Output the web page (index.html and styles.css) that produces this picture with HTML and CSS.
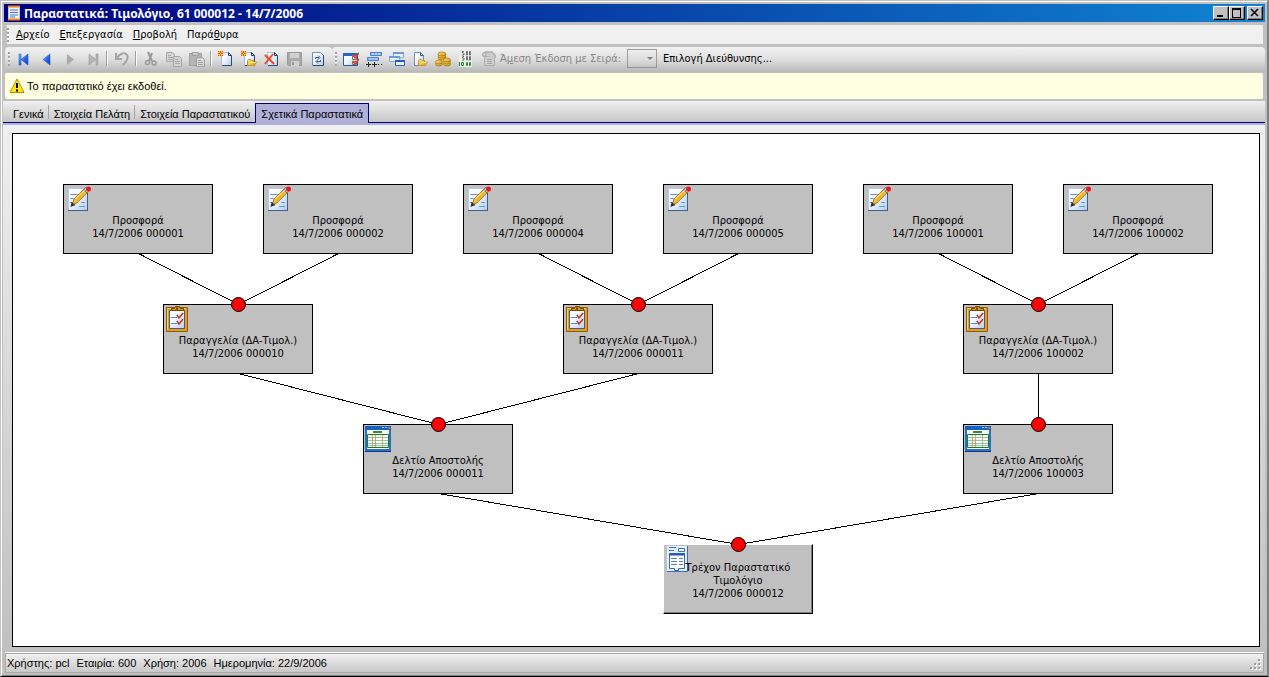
FILE: index.html
```html
<!DOCTYPE html>
<html lang="el">
<head>
<meta charset="utf-8">
<title>Παραστατικά: Τιμολόγιο, 61 000012 - 14/7/2006</title>
<link rel="stylesheet" href="styles.css">
</head>
<body>
<svg class="defs" aria-hidden="true">
  <defs>
    <linearGradient id="blue" x1="0" y1="0" x2="1" y2="1"><stop offset="0" stop-color="#8cc0ff"/><stop offset=".5" stop-color="#2a6cf0"/><stop offset="1" stop-color="#0a2fb0"/></linearGradient>
    <linearGradient id="paper" x1="0" y1="0" x2="1" y2="1"><stop offset="0" stop-color="#fff"/><stop offset=".4" stop-color="#f4f8ff"/><stop offset="1" stop-color="#b4cdec"/></linearGradient>
    <linearGradient id="gold" x1="0" y1="0" x2="1" y2="1"><stop offset="0" stop-color="#ffe878"/><stop offset="1" stop-color="#d09818"/></linearGradient>
    <symbol id="page" viewBox="0 0 16 16"><path d="M3.500 1.500h7l3 3v10h-10z" fill="url(#paper)" stroke="#a8bcd8"/><path d="M10.500 1.500v3h3" fill="#dce8f8" stroke="#28486c"/><path d="M4 14.500h9.500V4.500l-3-3" fill="none" stroke="#284c74"/></symbol>
    <symbol id="star" viewBox="0 0 16 16"><path d="M0 0h5v5H0z" fill="#ffc830"/><path d="M0 0h1v1H0zM2 0h1v2H2zM4 0h1v1H4zM0 2h2v1H0zM3 2h2v1H3zM0 4h1v1H0zM2 3h1v2H2zM4 4h1v1H4z" fill="#e84810"/><path d="M2 2h1v1H2z" fill="#ffffa0"/></symbol>
    <symbol id="folder" viewBox="0 0 16 16"><path d="M6.500 14.500V9.500l1-1h2l1 1h2v1.500h3l-2 3.500z" fill="url(#gold)" stroke="#c09828"/><path d="M8 13.500l2-2h4.500" fill="none" stroke="#fff0a0"/></symbol>
    <symbol id="i-note" viewBox="0 0 24 26"><path d="M1 2h19v22H1z" fill="url(#paper)"/><path d="M1.500 24V2.500H20" fill="none" stroke="#b4c8e8"/><path d="M1 24.500h20M20.500 6v19" stroke="#3c6090"/><path d="M3 8.500h9M3 12.500h6M3 16.500h4M14 16.500h4M12 20.500h6" stroke="#6c98dc"/><path d="M5 19l2-6L17 3l4 3L10 17z" fill="#f0b830" stroke="#906410" stroke-width=".7"/><path d="M8 13L18 4" stroke="#ffe888"/><path d="M17 3l2-2 3 4-2 2z" fill="#b8c8e0" stroke="#506888" stroke-width=".7"/><circle cx="21.500" cy="3" r="2.500" fill="#f01818"/><path d="M3.500 21l1-5 4 3z" fill="#303030"/></symbol>
    <symbol id="i-clip" viewBox="0 0 22 26"><path d="M.5 1.500h21v24H.5z" fill="#e89c18" stroke="#945800"/><path d="M1.500 24V2.500H20" fill="none" stroke="#ffd060"/><path d="M3.500 4.500h15v18h-15z" fill="url(#paper)" stroke="#3c5c98"/><path d="M5.500 4.500v-2h3l1-2h4l1 2h3v2z" fill="#d8981c" stroke="#744400"/><circle cx="11" cy="2.500" r="1" fill="#402800"/><path d="M5 11.500h6M5 17.500h6" stroke="#5888d8"/><path d="M11 9l2 3 4-5M11 15l2 3 4-5" fill="none" stroke="#c83020" stroke-width="1.500"/></symbol>
    <symbol id="i-table" viewBox="0 0 26 26"><path d="M0 0h26v26H0z" fill="#2470d0"/><path d="M0 0h26v4H0z" fill="#1760c4"/><path d="M17 1h2v1h-2zM20 1h2v1h-2z" fill="#a8d4ff"/><path d="M23 1h2v2h-2z" fill="#f06028"/><path d="M2 4h22v19H2z" fill="#f8fcff"/><path d="M8 5h9v2H8z" fill="#348c34"/><path d="M2.500 8.500h21v13h-21z" fill="#fff" stroke="#188018"/><path d="M3 11.500h20M3 14.500h20M3 17.500h20M3 19.500h20" stroke="#90c8a0"/><path d="M7.500 9v12M10.500 9v12M17.500 9v12" stroke="#d0a070"/><path d="M0 25.500h26" stroke="#103880"/></symbol>
    <symbol id="i-invoice" viewBox="0 0 21 26"><path d="M0 0h20v25H0z" fill="#e4eefc"/><path d="M20.500 0v25.500H0" fill="none" stroke="#3c6cc0"/><path d="M2 1.500h7M2 4.500h5" stroke="#3870c8"/><path d="M11.500 2.500h6v3h-6z" fill="#fff" stroke="#3870c8"/><path d="M2.500 7.500h15v15h-6v2h-4v-2h-5z" fill="#fff" stroke="#3468b8"/><path d="M2 8.500h16" stroke="#2458b0" stroke-width="2"/><path d="M4 12.500h6M4 15.500h6M4 18.500h6M12 12.500h4M12 15.500h4M12 18.500h4" stroke="#5080c8"/></symbol>
  </defs>
</svg>
<div class="window">
  <header class="titlebar">
    <svg class="app-icon" viewBox="0 0 16 16"><path d="M2 1h12v14H2z" fill="#eaf2fc"/><path d="M2 1.500h12M2 14.500h12" stroke="#f08010" stroke-width="2"/><path d="M4 5h8M4 7.500h8M4 10h8" stroke="#4878b8"/><path d="M2.500 3v10M13.500 3v10" stroke="#b8c8d8"/><path d="M4 12h5" stroke="#4878b8"/></svg>
    <h1 class="title">Παραστατικά: Τιμολόγιο, 61 000012 - 14/7/2006</h1>
    <div class="controls">
      <button class="control" aria-label="Ελαχιστοποίηση"><svg viewBox="0 0 12 10"><path d="M2 8h6" stroke="#000" stroke-width="2"/></svg></button>
      <button class="control" aria-label="Μεγιστοποίηση"><svg viewBox="0 0 12 10"><path d="M1.500 1h8v8h-8z" fill="none" stroke="#000"/><path d="M1 1h9" stroke="#000" stroke-width="2"/></svg></button>
      <button class="control control-close" aria-label="Κλείσιμο"><svg viewBox="0 0 12 10"><path d="M2 1l7 7M9 1L2 8" stroke="#000" stroke-width="1.500"/></svg></button>
    </div>
  </header>
  <nav class="menubar">
    <span class="grip"></span>
    <button class="menu"><u>Α</u>ρχείο</button>
    <button class="menu"><u>Ε</u>πεξεργασία</button>
    <button class="menu"><u>Π</u>ροβολή</button>
    <button class="menu">Παρά<u>θ</u>υρα</button>
  </nav>
  <div class="toolbars">
    <div class="toolbar">
      <span class="grip"></span>
      <button class="tool" aria-label="Πρώτο"><svg viewBox="0 0 16 16"><path d="M3 3h2v11H3zM12 3v11L5 8.500z" fill="url(#blue)" stroke="#2860d0" stroke-width=".6"/></svg></button>
      <button class="tool" aria-label="Προηγούμενο"><svg viewBox="0 0 16 16"><path d="M11 3v11L4 8.500z" fill="url(#blue)" stroke="#2860d0" stroke-width=".6"/></svg></button>
      <button class="tool" aria-label="Επόμενο" disabled><svg viewBox="0 0 16 16"><path d="M5 3v11l7-5.500z" fill="#aaa"/></svg></button>
      <button class="tool" aria-label="Τελευταίο" disabled><svg viewBox="0 0 16 16"><path d="M4 3v11l7-5.500zM11 3h2v11h-2z" fill="#b4b4b4" stroke="#9c9c9c" stroke-width=".6"/></svg></button>
      <span class="separator"></span>
      <button class="tool" aria-label="Αναίρεση" disabled><svg viewBox="0 0 16 16"><path d="M2 2v6h6M3 7c3-5 8-6 10-3s0 6-4 10" fill="none" stroke="#a4a4a4" stroke-width="2"/></svg></button>
      <span class="separator"></span>
      <button class="tool" aria-label="Αποκοπή" disabled><svg viewBox="0 0 16 16"><path d="M5 1l4 9M9 2L6 10" stroke="#999" stroke-width="2"/><circle cx="4.500" cy="11.500" r="2" fill="none" stroke="#999" stroke-width="1.500"/><circle cx="11" cy="12" r="2" fill="none" stroke="#999" stroke-width="1.500"/></svg></button>
      <button class="tool" aria-label="Αντιγραφή" disabled><svg viewBox="0 0 16 16"><g fill="#d4d4d4" stroke="#a8a8a8"><path d="M.5 1.500h6l2 2v7h-8z"/><path d="M7.500 5.500h6l2 2v8h-8z"/><path d="M2 4.500h3M2 6.500h5M2 8.500h5M9 8.500h3M9 10.500h5M9 12.500h5"/></g></svg></button>
      <button class="tool" aria-label="Επικόλληση" disabled><svg viewBox="0 0 16 16"><g stroke="#a0a0a0"><path d="M.5 2.500h12v12H.5z" fill="#b4b4b4"/><path d="M3.500 1.500h6v3h-6z" fill="#ccc"/><path d="M7.500 6.500h6l2 2v7h-8z" fill="#d8d8d8"/><path d="M9 9.500h3M9 11.500h5M9 13.500h5"/></g></svg></button>
      <span class="separator"></span>
      <button class="tool" aria-label="Νέο"><svg viewBox="0 0 16 16"><use href="#page"/><use href="#star"/></svg></button>
      <button class="tool" aria-label="Νέο από"><svg viewBox="0 0 16 16"><use href="#page"/><use href="#star"/><use href="#folder"/></svg></button>
      <button class="tool" aria-label="Διαγραφή"><svg viewBox="0 0 16 16"><use href="#page"/><path d="M1 4l9 9M9 3L1 13" stroke="#f04828" stroke-width="2"/></svg></button>
      <button class="tool" aria-label="Αποθήκευση" disabled><svg viewBox="0 0 16 16"><path d="M.5 1.500h14v13h-13l-1-1z" fill="#aaa" stroke="#989898"/><path d="M3 2h9v5H3zM4 10h8v5H4z" fill="#d0d0d0"/><path d="M5 11h2v3H5z" fill="#999"/></svg></button>
      <button class="tool" aria-label="Ανανέωση"><svg viewBox="0 0 16 16"><path d="M2.500 1.500h8l3 3v10h-11z" fill="url(#paper)" stroke="#7090b8"/><path d="M3 14.500h10.500V4.500" fill="none" stroke="#284870"/><path d="M5.500 8V6.500H9M8 4.500l2 2-2 2M10.500 9v1.500H7M8 8.500l-2 2 2 2" fill="none" stroke="#345490"/></svg></button>
    </div>
    <div class="toolbar toolbar-wide">
      <span class="grip"></span>
      <button class="tool" aria-label="Επιλογές"><svg viewBox="0 0 16 16"><path d="M.5 2.500h14v12H.5z" fill="url(#paper)" stroke="#2458a8"/><path d="M0 2h15v3H0z" fill="#2864c8"/><path d="M9.500 4.500h4v4h-4zM9.500 10.500h4v3h-4z" fill="#fff" stroke="#707070"/><path d="M10 4l2 3 4-5M10 10l2 3 4-5" fill="none" stroke="#f03818" stroke-width="1.500"/></svg></button>
      <button class="tool" aria-label="Προσθήκη γραμμής"><svg viewBox="0 0 16 16"><path d="M4.500 1.500h11v3h-11zM1.500 6.500h11v3h-11z" fill="#84aef0" stroke="#5080d0"/><path d="M6 3h8M3 8h8" stroke="#e0ecff" stroke-dasharray="2 1"/><path d="M0 13.500h5M2.500 11v5M6 13.500h5M8.500 11v5M12 13.500h1M15 13.500h1" stroke="#222"/></svg></button>
      <button class="tool" aria-label="Παράθυρα"><svg viewBox="0 0 16 16"><g fill="#e4efff" stroke="#8ca8d8"><path d="M4.500 1.500h10v5h-10zM.5 5.500h10v5H.5z"/><path d="M6.500 9.500h9v5h-9z" stroke="#2860c8"/></g><path d="M4 2h11M0 6h11" stroke="#7098d8" stroke-width="2"/><path d="M6 10h10" stroke="#2060d8" stroke-width="2"/></svg></button>
      <button class="tool" aria-label="Άνοιγμα"><svg viewBox="0 0 16 16"><path d="M2.500 1.500h6l3 3v10h-9z" fill="url(#paper)" stroke="#7890b0"/><path d="M8.500 1.500v3h3" fill="none" stroke="#385880"/><use href="#folder"/></svg></button>
      <button class="tool" aria-label="Πληρωμές"><svg viewBox="0 0 16 16"><g fill="url(#gold)" stroke="#a86c08" stroke-width=".7"><ellipse cx="7" cy="7" rx="4" ry="2"/><ellipse cx="7" cy="5" rx="4" ry="2"/><ellipse cx="7" cy="3" rx="4" ry="2"/><ellipse cx="4" cy="13" rx="3.500" ry="2"/><ellipse cx="4" cy="11" rx="3.500" ry="2"/><ellipse cx="12" cy="13" rx="3.500" ry="2"/><ellipse cx="12" cy="11" rx="3.500" ry="2"/><ellipse cx="12" cy="9" rx="3.500" ry="2"/></g></svg></button>
      <button class="tool" aria-label="Σύνολα"><svg viewBox="0 0 16 16"><path d="M1 0h13v16H1z" fill="#ececec"/><g fill="none" stroke="#585858" stroke-width=".8"><path d="M6 .5H4.500v1.500H6v2H4M8.500.5h1v3.500h-1zM11.500.5h1v3.500h-1z"/><path d="M6 5.500H4.500V7H6v2H4M8.500 5.500h1V9h-1zM11.500 5.500h1V9h-1z"/></g><path d="M1.500 11v4M3.500 11.500h2v3h-2zM8.500 11.500h1v3h-1zM11.500 11.500h1v3h-1z" fill="none" stroke="#209828"/></svg></button>
      <button class="tool" aria-label="Έκδοση" disabled><svg viewBox="0 0 16 16"><path d="M3.500 5.500h10v9h-10z" fill="#d0d0d0" stroke="#acacac"/><path d="M1 4l3-3h7l3 3v3M1 4l3 2 1-4" fill="#ccc" stroke="#b0b0b0" stroke-width="1.500"/><path d="M6 8.500h5M6 10.500h5M6 12.500h5" stroke="#a4a4a4"/></svg></button>
      <label class="series-label" for="series">Ά<u>μ</u>εση Έκδοση με Σειρά:</label>
      <span class="series-box"><select id="series" class="series" disabled></select></span>
      <button class="address">Επιλογή Διεύθυνσης...</button>
    </div>
  </div>
  <div class="notice" role="status">
    <svg class="warning" viewBox="0 0 16 16"><path d="M8 1l7 13.500H1z" fill="#ffe818" stroke="#b09000" stroke-linejoin="round"/><path d="M8 5v5M8 11.500v2" stroke="#000" stroke-width="2"/></svg>
    <span>Το παραστατικό έχει εκδοθεί.</span>
  </div>
  <nav class="tabs" role="tablist">
    <button class="tab" role="tab">Γενικά</button>
    <button class="tab" role="tab">Στοιχεία Πελάτη</button>
    <button class="tab" role="tab">Στοιχεία Παραστατικού</button>
    <button class="tab tab-active" role="tab" aria-selected="true">Σχετικά Παραστατικά</button>
  </nav>
  <main class="content">
    <div class="canvas">
      <svg class="links" viewBox="0 0 1200 500"><path class="link" d="M125.500 119.500l100 51 100-51M525.500 119.500l100 51 100-51M925.500 119.500l100 51 100-51M225.500 239.500l200 51 200-51M1025.500 239.500v51M425.500 359.500l300 51 300-51"/></svg>
      <div class="node offer n1"><svg class="node-icon" viewBox="0 0 24 26"><use href="#i-note"/></svg><span>Προσφορά</span><span>14/7/2006 000001</span></div>
      <div class="node offer n2"><svg class="node-icon" viewBox="0 0 24 26"><use href="#i-note"/></svg><span>Προσφορά</span><span>14/7/2006 000002</span></div>
      <div class="node offer n3"><svg class="node-icon" viewBox="0 0 24 26"><use href="#i-note"/></svg><span>Προσφορά</span><span>14/7/2006 000004</span></div>
      <div class="node offer n4"><svg class="node-icon" viewBox="0 0 24 26"><use href="#i-note"/></svg><span>Προσφορά</span><span>14/7/2006 000005</span></div>
      <div class="node offer n5"><svg class="node-icon" viewBox="0 0 24 26"><use href="#i-note"/></svg><span>Προσφορά</span><span>14/7/2006 100001</span></div>
      <div class="node offer n6"><svg class="node-icon" viewBox="0 0 24 26"><use href="#i-note"/></svg><span>Προσφορά</span><span>14/7/2006 100002</span></div>
      <div class="node order n7"><svg class="node-icon" viewBox="0 0 22 26"><use href="#i-clip"/></svg><span>Παραγγελία (ΔΑ-Τιμολ.)</span><span>14/7/2006 000010</span><i class="joint"></i></div>
      <div class="node order n8"><svg class="node-icon" viewBox="0 0 22 26"><use href="#i-clip"/></svg><span>Παραγγελία (ΔΑ-Τιμολ.)</span><span>14/7/2006 000011</span><i class="joint"></i></div>
      <div class="node order n9"><svg class="node-icon" viewBox="0 0 22 26"><use href="#i-clip"/></svg><span>Παραγγελία (ΔΑ-Τιμολ.)</span><span>14/7/2006 100002</span><i class="joint"></i></div>
      <div class="node delivery n10"><svg class="node-icon" viewBox="0 0 26 26"><use href="#i-table"/></svg><span>Δελτίο Αποστολής</span><span>14/7/2006 000011</span><i class="joint"></i></div>
      <div class="node delivery n11"><svg class="node-icon" viewBox="0 0 26 26"><use href="#i-table"/></svg><span>Δελτίο Αποστολής</span><span>14/7/2006 100003</span><i class="joint"></i></div>
      <div class="node current n12"><svg class="node-icon" viewBox="0 0 21 26"><use href="#i-invoice"/></svg><span class="line">Τρέχον Παραστατικό</span><span>Τιμολόγιο</span><span>14/7/2006 000012</span><i class="joint"></i></div>
    </div>
  </main>
  <footer class="statusbar">
    <span>Χρήστης: pcl</span><span>Εταιρία: 600</span><span>Χρήση: 2006</span><span>Ημερομηνία: 22/9/2006</span>
    <svg class="resize" viewBox="0 0 12 12"><path d="M9 1h2v2H9zM5 5h2v2H5zM9 5h2v2H9zM1 9h2v2H1zM5 9h2v2H5zM9 9h2v2H9z" fill="#fff"/><path d="M8 0h2v2H8zM4 4h2v2H4zM8 4h2v2H8zM0 8h2v2H0zM4 8h2v2H4zM8 8h2v2H8z" fill="#a0a0a0"/></svg>
  </footer>
</div>
</body>
</html>
```
FILE: styles.css
```css
* { box-sizing: border-box; }

body {
  margin: 0;
  background: #c0c0c0;
  color: #000;
  font: 11px/13px Tahoma, "DejaVu Sans Condensed", "Noto Sans", sans-serif;
}

button {
  margin: 0;
  padding: 0;
  border: 0;
  background: none;
  color: inherit;
  font: inherit;
  white-space: nowrap;
}

svg { display: block; flex: none; }
.defs { position: absolute; width: 0; height: 0; }

.window {
  display: flex;
  flex-direction: column;
  height: 100vh;
  padding: 2px;
  border: 1px solid;
  border-width: 1px 2px 1px 1px;
  border-color: #c0c0c0 #808080 #000 #c0c0c0;
  box-shadow: inset 1px 1px #fff, inset 0 -1px #808080;
}

.titlebar {
  display: flex;
  align-items: center;
  height: 18px;
  margin: 1px 0 0 1px;
  padding: 0 2px;
  background: linear-gradient(90deg, #000080, #1084d0);
  color: #fff;
}
.app-icon { width: 16px; height: 16px; }
.title {
  flex: 1;
  margin: 0 0 0 2px;
  font-family: "Noto Sans", sans-serif;
  font-size: 12px;
  font-weight: bold;
}
.controls { display: flex; }
.control {
  display: flex;
  width: 16px;
  height: 14px;
  padding: 1px;
  border: 1px solid;
  border-color: #fff #000 #000 #fff;
  background: #c0c0c0;
  box-shadow: inset -1px -1px #808080;
}
.control svg { width: 12px; height: 10px; shape-rendering: crispEdges; }
.control-close { margin-left: 2px; }
.control-close svg { shape-rendering: auto; }

.grip {
  flex: none;
  width: 4px;
  height: 14px;
  background: repeating-linear-gradient(#a4a4a4 0 2px, #fff 2px 3px, transparent 3px 4px) left / 2px 100% no-repeat;
}

.menubar {
  display: flex;
  align-items: center;
  height: 19px;
  margin: 3px 2px 0 4px;
  background: #f0f0f0;
}
.menu { padding: 0 5px; }

.toolbars { display: flex; margin: 3px 0 0 2px; }
.toolbar {
  display: flex;
  align-items: center;
  width: 327px;
  height: 25px;
  padding: 0 0 2px 3px;
  border-radius: 4px;
  background: linear-gradient(#f2f2f2, #dedede 50%, #b8b8b8);
}
.toolbar-wide { flex: 1; width: auto; }
.toolbar .separator {
  width: 2px;
  height: 15px;
  margin: 0 2px;
  border-left: 1px solid #a0a0a0;
  border-right: 1px solid #fff;
}
.tool {
  display: flex;
  flex: none;
  justify-content: center;
  width: 23px;
}
.tool svg { width: 16px; height: 16px; }
.series-label { color: #868686; white-space: nowrap; }
.series-box { position: relative; display: flex; margin: 0 6px; }
.series-box::after {
  content: "";
  position: absolute;
  right: 4px;
  top: 8px;
  border: 3px solid transparent;
  border-top-color: #808080;
}
.series {
  width: 30px;
  height: 19px;
  border: 1px solid #808080;
  border-radius: 0;
  background: transparent;
  appearance: none;
}

.notice,
.tabs,
.statusbar { font-family: "Liberation Sans", sans-serif; }

.notice {
  display: flex;
  align-items: center;
  gap: 2px;
  height: 26px;
  margin: 1px 2px 0;
  padding-left: 4px;
  border-radius: 2px;
  background: #ffffe1;
}
.warning { width: 16px; height: 16px; }

.tabs {
  display: flex;
  align-items: flex-end;
  height: 24px;
  margin-top: 2px;
  padding-left: 5px;
  border-bottom: 2px solid #b0b0d8;
  background: linear-gradient(#f0f0f0, #c4c4c4);
  box-shadow: inset 0 -1px #000080;
}
.tab {
  height: 20px;
  padding: 2px 5px 0;
  background: linear-gradient(#a4a4a4, #a4a4a4) right 2px / 1px 14px no-repeat;
}
.tab:nth-last-child(2) { background: none; }
.tab-active {
  padding-top: 1px;
  border: 1px solid #000080;
  border-bottom: 0;
  background: #b0b0d8;
}

.content {
  display: flex;
  flex: 1;
  min-height: 0;
  padding: 8px 5px 6px 9px;
  background: linear-gradient(#f0f0f0, #c0c0c0);
}
.canvas {
  position: relative;
  flex: 1;
  overflow: hidden;
  border: 1px solid #000;
  background: #fff;
}
.links { position: absolute; left: 0; top: 0; width: 1200px; height: 500px; }
.link { fill: none; stroke: #000; shape-rendering: crispEdges; }

.node {
  position: absolute;
  display: flex;
  flex-direction: column;
  justify-content: flex-end;
  width: 150px;
  height: 70px;
  padding-bottom: 13px;
  border: 1px solid #000;
  background: #c0c0c0;
  text-align: center;
  white-space: nowrap;
}
.node-icon { position: absolute; left: 3px; top: 1px; width: 24px; height: 26px; }
.order .node-icon { left: 2px; width: 22px; }
.delivery .node-icon { left: 1px; width: 26px; }
.current .node-icon { width: 21px; }
.line { z-index: 1; }
.current {
  border-color: #fff #000 #000 #fff;
  box-shadow: inset -1px -1px #808080;
}
.joint {
  position: absolute;
  left: 67px;
  top: -8px;
  width: 15px;
  height: 15px;
  border: 1px solid #000;
  border-radius: 50%;
  background: #f00;
}
.offer { top: 50px; }
.order { top: 170px; }
.delivery { top: 290px; }
.current { top: 410px; }
.n1 { left: 50px; }
.n2 { left: 250px; }
.n3 { left: 450px; }
.n4 { left: 650px; }
.n5 { left: 850px; }
.n6 { left: 1050px; }
.n7 { left: 150px; }
.n8 { left: 550px; }
.n9 { left: 950px; }
.n10 { left: 350px; }
.n11 { left: 950px; }
.n12 { left: 650px; }

.statusbar {
  display: flex;
  align-items: center;
  gap: 7px;
  height: 20px;
  margin: 0 1px 1px 2px;
  padding: 0 1px;
  border: 1px solid #a8a8a8;
  background: linear-gradient(#f0f0f0, #c8c8c8);
  box-shadow: 0 -1px #fff;
}
.resize { width: 12px; height: 12px; margin: 4px 0 0 auto; }
```
